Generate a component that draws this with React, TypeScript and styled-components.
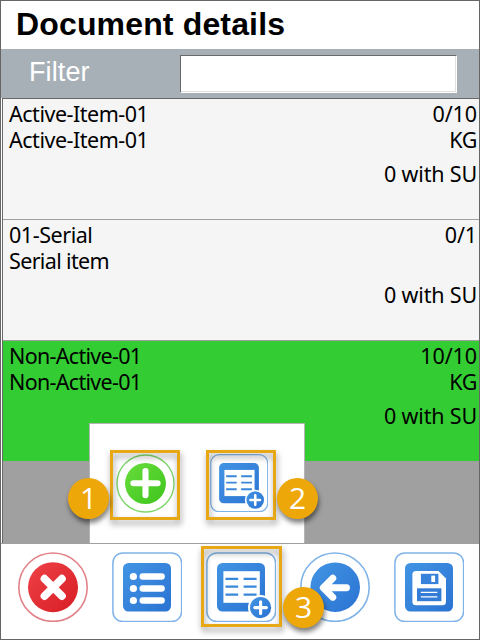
import React from "react";
import styled, { createGlobalStyle } from "styled-components";

const Global = createGlobalStyle`
  *, *::before, *::after { box-sizing: border-box; }
  html, body { margin: 0; padding: 0; }
  body { background: #fff; }
`;

const Frame = styled.main`
  position: relative;
  width: 480px;
  height: 640px;
  display: flex;
  flex-direction: column;
  overflow: hidden;
  border: 1px solid #666;
  background: #fff;
  font-family: "Noto Sans", Tahoma, sans-serif;
  color: #000;
`;

const Title = styled.h1`
  flex: 0 0 48px;
  margin: 0;
  padding-left: 15px;
  font: bold 32px/46px "Liberation Sans", Arial, sans-serif;
  letter-spacing: 0.15px;
  white-space: nowrap;
`;

const FilterBar = styled.label`
  flex: 0 0 49px;
  display: flex;
  align-items: flex-start;
  padding: 6px 22px 0 28px;
  background: #a7b0b7;
  color: #fff;
  font: 27px/34px "Liberation Sans", Arial, sans-serif;
  letter-spacing: 0.1px;
`;

const FilterName = styled.span`
  flex: 1;
`;

const FilterInput = styled.input`
  width: 277px;
  height: 38px;
  padding: 0 6px;
  border: 1px solid;
  border-color: #696969 #fff #fff #696969;
  border-radius: 0;
  outline: none;
  background: #fff;
  box-shadow: inset -1px -1px 0 #e0e0e0;
  font: 24px "Liberation Sans", Arial, sans-serif;
`;

const List = styled.section`
  flex: 0 0 445px;
  margin-left: 1px;
  border-top: 1px solid #696969;
  border-left: 1px solid #696969;
  background: #a0a0a0;
`;

const Row = styled.article<{ $done?: boolean }>`
  height: 121px;
  padding: 2px 2px 0 6px;
  border-bottom: 1px solid #a0a0a0;
  background: ${(p) => (p.$done ? "#33cd33" : "#f5f5f5")};
  font-size: 21.5px;
  line-height: 26px;
`;

const Line = styled.div<{ $gap?: number }>`
  display: flex;
  justify-content: space-between;
  height: 26px;
  margin-top: ${(p) => p.$gap ?? 0}px;
  white-space: pre;
`;

const Run = styled.span<{ $spacing?: number }>`
  letter-spacing: ${(p) => p.$spacing ?? 0}px;
`;

const Footer = styled.footer`
  flex: 1;
  display: flex;
  align-items: flex-start;
  gap: 24px;
  padding: 8px 0 0 17px;
  border-top: 1px solid #a0a0a0;
  background: #fff;
`;

const IconButton = styled.button<{ $size: number }>`
  flex: none;
  width: ${(p) => p.$size}px;
  height: ${(p) => p.$size}px;
  padding: 0;
  border: 0;
  background: none;
  svg { display: block; width: 100%; height: 100%; }
`;

const Popup = styled.div`
  position: absolute;
  left: 88px;
  top: 422px;
  width: 216px;
  height: 120px;
  display: flex;
  gap: 35px;
  padding: 30px 0 0 26px;
  border: 1px solid #b4b4b4;
  border-bottom: 0;
  background: #fff;
`;

const Highlight = styled.div<{ $x: number; $y: number; $size: number }>`
  position: absolute;
  left: ${(p) => p.$x}px;
  top: ${(p) => p.$y}px;
  width: ${(p) => p.$size}px;
  height: ${(p) => p.$size}px;
  border: 3.5px solid #e8a714;
  filter: drop-shadow(1px 4px 3px rgba(0, 0, 0, 0.42));
  pointer-events: none;
`;

const Badge = styled.div<{ $x: number; $y: number }>`
  position: absolute;
  left: ${(p) => p.$x}px;
  top: ${(p) => p.$y}px;
  width: 41px;
  height: 41px;
  border-radius: 50%;
  background: #eda708;
  box-shadow: 1px 4px 5px rgba(0, 0, 0, 0.5);
  color: #fff;
  text-align: center;
  font: 30px/40px "Open Sans", "Segoe UI", sans-serif;
`;

const Defs = styled.svg`
  position: absolute;
  width: 0;
  height: 0;
`;

const Gradients = () => (
  <Defs aria-hidden="true">
    <defs>
      <linearGradient id="blue" x1="0" y1="0" x2="1" y2="1">
        <stop offset="0" stopColor="#4294e4" />
        <stop offset="1" stopColor="#2a73d2" />
      </linearGradient>
      <linearGradient id="red" x1="0" y1="0" x2="1" y2="1">
        <stop offset="0" stopColor="#ee4247" />
        <stop offset="1" stopColor="#d81c24" />
      </linearGradient>
      <linearGradient id="green" x1="0" y1="0" x2="1" y2="1">
        <stop offset="0" stopColor="#68dd3c" />
        <stop offset="1" stopColor="#3fc41c" />
      </linearGradient>
    </defs>
  </Defs>
);

const SquareBase = () => (
  <>
    <rect x="0.9" y="0.9" width="68.7" height="68.7" rx="10" fill="#fff" stroke="#80b4e8" strokeWidth="1.5" />
    <rect x="11" y="11" width="48" height="48.5" rx="5.5" fill="url(#blue)" />
  </>
);

const CloseIcon = () => (
  <svg viewBox="0 0 70 70">
    <circle cx="35" cy="35.2" r="34.2" fill="#fff" stroke="#e28389" strokeWidth="1.6" />
    <circle cx="35" cy="35.2" r="25" fill="url(#red)" />
    <path d="M26.5 26.7 43.9 44.1M43.9 26.7 26.5 44.1" stroke="#fff" strokeWidth="7.8" strokeLinecap="round" />
  </svg>
);

const ListIcon = () => (
  <svg viewBox="0 0 70 70">
    <SquareBase />
    {[24.5, 36.5, 48.5].map((y) => (
      <g key={y} fill="#fff">
        <circle cx="21.4" cy={y} r="3.6" />
        <rect x="27.5" y={y - 3.2} width="25.3" height="6.4" rx="3.2" />
      </g>
    ))}
  </svg>
);

const TableAddIcon = () => (
  <svg viewBox="0 0 70 70">
    <SquareBase />
    <rect x="17.4" y="19.2" width="36.4" height="31.6" fill="#fff" />
    <path d="M19.5 26.8H32.2M37.6 26.8H50.6M19.5 34.6H32.2M37.6 34.6H50.6M19.5 42.6H32.2M37.6 42.6H50.6" stroke="#3987da" strokeWidth="2.3" />
    <circle cx="54.6" cy="55.6" r="12.6" fill="#fff" />
    <circle cx="54.6" cy="55.6" r="10.6" fill="url(#blue)" />
    <path d="M54.6 49.8V61.4M48.8 55.6H60.4" stroke="#fff" strokeWidth="3.1" strokeLinecap="round" />
  </svg>
);

const BackIcon = () => (
  <svg viewBox="0 0 70 70">
    <circle cx="35" cy="35.2" r="34.2" fill="#fff" stroke="#80b4e8" strokeWidth="1.6" />
    <circle cx="35.2" cy="35.2" r="24.8" fill="url(#blue)" />
    <path d="M46.5 35.7H24M32.8 26.2 23.3 35.7 32.8 45.2" fill="none" stroke="#fff" strokeWidth="6.9" strokeLinecap="round" strokeLinejoin="round" />
  </svg>
);

const SaveIcon = () => (
  <svg viewBox="0 0 70 70">
    <SquareBase />
    <path d="M22 19H44.5L52 26.5V49.7Q52 53.3 48.4 53.3H22Q18.4 53.3 18.4 49.7V22.6Q18.4 19 22 19Z" fill="#fff" />
    <rect x="26.9" y="21.8" width="17.5" height="10.3" fill="#3681d9" />
    <rect x="37.3" y="23.6" width="3.8" height="6.4" fill="#fff" />
    <path d="M23 36.3H47.4V49.2H23Z" fill="#337dd7" />
    <path d="M26.8 40.3H43.3M26.8 44.8H43.3" stroke="#fff" strokeWidth="1.3" />
  </svg>
);

const AddIcon = () => (
  <svg viewBox="0 0 60 60">
    <circle cx="30" cy="30" r="29" fill="#fff" stroke="#7ed66a" strokeWidth="1.4" />
    <circle cx="30" cy="30" r="20.8" fill="url(#green)" />
    <path d="M30 17.4V42M17.7 29.7H42.3" stroke="#fff" strokeWidth="6.2" strokeLinecap="round" />
  </svg>
);

type Item = {
  code: string;
  name: string;
  quantity: string;
  unit: string;
  spacing: [code: number, name: number];
  done?: boolean;
};

const items: Item[] = [
  { code: "Active-Item-01", name: "Active-Item-01", quantity: "0/10", unit: "KG", spacing: [-0.48, -0.48] },
  { code: "01-Serial", name: "Serial item", quantity: "0/1", unit: "", spacing: [-0.45, -0.65] },
  { code: "Non-Active-01", name: "Non-Active-01", quantity: "10/10", unit: "KG", spacing: [-0.7, -0.7], done: true },
];

export default function App() {
  return (
    <>
      <Global />
      <Frame>
        <Gradients />
        <Title>Document details</Title>
        <FilterBar>
          <FilterName>Filter</FilterName>
          <FilterInput aria-label="Filter" />
        </FilterBar>
        <List>
          {items.map((item) => (
            <Row key={item.code} $done={item.done}>
              <Line>
                <Run $spacing={item.spacing[0]}>{item.code}</Run>
                <Run $spacing={-0.1}>{item.quantity}</Run>
              </Line>
              <Line>
                <Run $spacing={item.spacing[1]}>{item.name}</Run>
                <Run $spacing={-0.4}>{item.unit}</Run>
              </Line>
              <Line $gap={8}>
                <Run />
                <Run $spacing={-0.17}>0 with SU</Run>
              </Line>
            </Row>
          ))}
        </List>
        <Footer>
          <IconButton $size={70} aria-label="Close"><CloseIcon /></IconButton>
          <IconButton $size={70} aria-label="List"><ListIcon /></IconButton>
          <IconButton $size={70} aria-label="Add lines"><TableAddIcon /></IconButton>
          <IconButton $size={70} aria-label="Back"><BackIcon /></IconButton>
          <IconButton $size={70} aria-label="Save"><SaveIcon /></IconButton>
        </Footer>
        <Popup>
          <IconButton $size={59} aria-label="Add"><AddIcon /></IconButton>
          <IconButton $size={58} aria-label="Add from list"><TableAddIcon /></IconButton>
        </Popup>
        <Highlight $x={109} $y={449} $size={70} />
        <Highlight $x={205} $y={449} $size={70} />
        <Highlight $x={200} $y={545} $size={81} />
        <Badge $x={67} $y={477}>1</Badge>
        <Badge $x={276} $y={477}>2</Badge>
        <Badge $x={282} $y={586}>3</Badge>
      </Frame>
    </>
  );
}
